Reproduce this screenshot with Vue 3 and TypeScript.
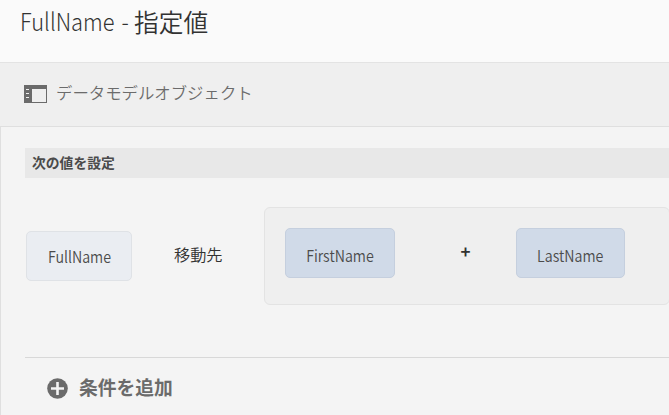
<script setup lang="ts">
interface Operand {
  name: string
  kind: string
}

const target: Operand = { name: 'FullName', kind: 'target' }
const first: Operand = { name: 'FirstName', kind: 'first' }
const last: Operand = { name: 'LastName', kind: 'last' }
</script>

<template>
  <main class="page">
    <header class="title">
      <span class="title-name"><span class="narrow">{{ target.name }} -</span></span>
      <span class="title-kind">指定値</span>
    </header>
    <div class="toolbar">
      <svg class="panel-icon" width="23" height="18" viewBox="0 0 23 18">
        <path fill="#6b6b6b" fill-rule="evenodd" d="M0 0H23V18H0ZM8 4V17H22V4ZM2 4V5H5V4ZM2 8V9H5V8ZM2 12V13H5V12Z" />
      </svg>
      <span class="toolbar-text">データモデルオブジェクト</span>
    </div>
    <section class="editor">
      <h2 class="heading"><span>次の値を設定</span></h2>
      <div class="rule">
        <div class="chip" :class="target.kind"><span class="label">{{ target.name }}</span></div>
        <span class="to">移動先</span>
        <div class="group">
          <div class="chip" :class="first.kind"><span class="label">{{ first.name }}</span></div>
          <span class="operator">+</span>
          <div class="chip" :class="last.kind"><span class="label">{{ last.name }}</span></div>
        </div>
      </div>
      <div class="add">
        <svg width="21" height="21" viewBox="0 0 21 21">
          <circle cx="10.5" cy="10.5" r="10.3" fill="#6b6b6b" />
          <path d="M10.5 4V17M4 10.5H17" stroke="#f4f4f4" stroke-width="2.6" />
        </svg>
        <span class="add-text">条件を追加</span>
      </div>
    </section>
  </main>
</template>

<style>
body {
  margin: 0;
  overflow: hidden;
}
</style>

<style scoped>
.page {
  box-sizing: border-box;
  width: 669px;
  height: 415px;
  overflow: hidden;
  display: flex;
  flex-direction: column;
  background: #f4f4f4;
  color: #323232;
  font-family: "Noto Sans CJK JP", sans-serif;
  white-space: nowrap;
}
.title {
  box-sizing: border-box;
  height: 63px;
  flex: none;
  display: flex;
  gap: 7px;
  padding: 3px 0 0 20px;
  background: #fafafa;
  border-bottom: 1px solid #e3e3e3;
  font-size: 24.5px;
  font-weight: 300;
  line-height: 36px;
}
.title-name {
  width: 107px;
}
.title-kind {
  font-size: 24.7px;
  font-weight: 350;
}
.narrow {
  display: inline-block;
  word-spacing: 2.5px;
  transform: scaleX(0.89);
  transform-origin: 0 50%;
}
.toolbar {
  box-sizing: border-box;
  height: 63px;
  flex: none;
  display: flex;
  align-items: center;
  gap: 9px;
  padding: 0 0 6px 24px;
  background: #efefef;
  color: #6b6b6b;
  font-size: 16.4px;
  font-weight: 350;
}
.panel-icon {
  position: relative;
  top: 2px;
}
.editor {
  box-sizing: border-box;
  height: 289px;
  border-top: 1px solid #dfdfdf;
  border-left: 1px solid #dfdfdf;
  padding: 21px 0 0 24px;
}
.heading {
  margin: 0;
  height: 30px;
  padding-left: 7px;
  background: #e8e8e8;
  color: #4b4b4b;
  font-size: 13.8px;
  font-weight: 700;
  line-height: 29px;
}
.rule {
  box-sizing: border-box;
  height: 179px;
  display: flex;
  align-items: flex-start;
  padding: 29px 0 0 1px;
}
.chip {
  box-sizing: border-box;
  height: 50px;
  flex: none;
  border: 1px solid #c5cfde;
  border-radius: 5px;
  background: #d0dae8;
  color: #4b4b4b;
  font-size: 16px;
  font-weight: 350;
  line-height: 52px;
  text-align: center;
}
.label {
  display: inline-block;
  transform: scaleX(0.89);
}
.target {
  width: 106px;
  margin-top: 24px;
  background: #eaedf2;
  border-color: #dfe2e6;
  line-height: 49px;
}
.first {
  width: 110px;
}
.last {
  width: 109px;
}
.to {
  flex: none;
  width: 90px;
  margin: 35px 0 0 42px;
  font-size: 16.2px;
  font-weight: 350;
  line-height: 24px;
}
.group {
  box-sizing: border-box;
  width: 406px;
  height: 98px;
  flex: none;
  display: flex;
  padding: 20px;
  border: 1px solid #e3e3e3;
  border-radius: 6px;
  background: #efefef;
}
.operator {
  box-sizing: border-box;
  width: 121px;
  padding-left: 20px;
  text-align: center;
  font-size: 17px;
  font-weight: 700;
  line-height: 46px;
}
.add {
  box-sizing: border-box;
  display: flex;
  align-items: center;
  gap: 11px;
  height: 62px;
  padding: 0 0 4px 22px;
  border-top: 1px solid #d8d8d8;
  color: #6b6b6b;
  font-size: 18.8px;
  font-weight: 700;
}
.add svg {
  position: relative;
  top: 2px;
}
</style>
